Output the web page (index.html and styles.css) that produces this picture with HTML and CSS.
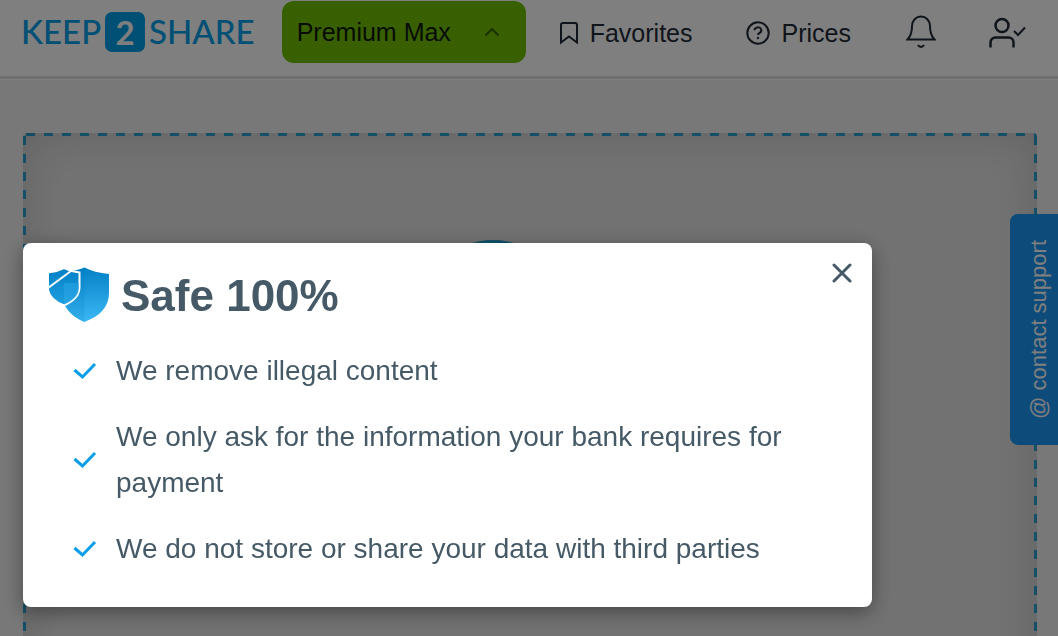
FILE: index.html
```html
<!DOCTYPE html>
<html lang="en">
<head>
    <meta charset="UTF-8">
    <meta name="viewport" content="width=device-width, initial-scale=1.0">
    <title>Keep2Share</title>
    <link rel="stylesheet" href="styles.css">
</head>
<body>
    <header class="header">
        <a href="#" class="logo"><span class="logo-word">KEEP</span><span class="logo-two">2</span><span class="logo-word">SHARE</span></a>
        <button type="button" class="premium">
            Premium Max
            <svg class="premium-arrow" width="16" height="10" viewBox="0 0 16 10"><path d="M1.5 8.5 8 2l6.500 6.500"/></svg>
        </button>
        <nav class="nav">
            <a href="#" class="nav-link">
                <svg width="20" height="24" viewBox="0 0 20 24"><path d="M2 21.5V4a2 2 0 0 1 2-2h12a2 2 0 0 1 2 2v17.5l-8-6z"/></svg>
                Favorites
            </a>
            <a href="#" class="nav-link">
                <svg width="24" height="24" viewBox="0 0 24 24"><circle cx="12" cy="12" r="10.7"/><path d="M8.5 9.3a3.4 3 0 1 1 5 2.7c-1 .5-1.5 1-1.500 2"/><circle class="dot" cx="12" cy="17" r="1.2"/></svg>
                Prices
            </a>
        </nav>
        <div class="user-tools">
            <button type="button" aria-label="Notifications">
                <svg width="30" height="34" viewBox="0 0 30 34"><path d="M1.5 24.5C5 21 6 17 6 11a9 9.500 0 0 1 18 0c0 6 1 10 4.500 13.500z"/><path d="M12 30c1.500 2.500 4.500 2.500 6 0"/></svg>
            </button>
            <button type="button" aria-label="Account">
                <svg width="38" height="34" viewBox="0 0 38 34"><g stroke-width="2.5"><circle cx="14" cy="10.5" r="6.5"/><path d="M2.5 32.5v-5a5 5 0 0 1 5-5h13a5 5 0 0 1 5 5v5"/></g><path d="m26 16 4 4 7-7.500"/></svg>
            </button>
        </div>
    </header>

    <main class="main">
        <section class="upload">
            <div class="upload-circle"></div>
        </section>
    </main>

    <a href="#" class="support">@ contact support</a>

    <div class="overlay">
        <div class="modal" role="dialog" aria-modal="true" aria-labelledby="modal-title">
            <div class="modal-head">
                <svg class="shield" width="62" height="58" viewBox="0 0 62 58">
                    <defs>
                        <linearGradient id="shield" x1="0" y1="0" x2="0" y2="1">
                            <stop offset="0" stop-color="#0480c6"/>
                            <stop offset="1" stop-color="#3bb9f5"/>
                        </linearGradient>
                        <linearGradient id="shield-small" x1="0" y1="0" x2="0" y2="1">
                            <stop offset="0" stop-color="#0480c6"/>
                            <stop offset="1" stop-color="#1f9fe0"/>
                        </linearGradient>
                    </defs>
                    <path d="M37.5 .5C44 4 52 6 62 7v19c0 14-9 23-24.500 29C28 51 22 46 17.500 38L24 4c5-.5 9-1.500 13.500-3.500z" fill="url(#shield)"/>
                    <path d="M24 4c5-.5 9-1.500 13.500-3.500V55C28 51 22 46 17.500 38z" fill="#0074b8" opacity=".15"/>
                    <path class="line" d="M1 5.500c6-.5 11-2 16-4.500 5 2.500 10 4 15.500 4.500V20c0 9-6 14-15.500 18.500C8 35 2 29 1 23z" fill="url(#shield-small)"/>
                    <path d="M17 16h15v5c0 8-6 13-15 16.500z" fill="#2ba8e8" opacity=".5"/>
                    <path class="line" d="M1 21 24 4"/>
                </svg>
                <h2 class="modal-title" id="modal-title">Safe 100%</h2>
                <button type="button" class="close" aria-label="Close">
                    <svg width="20" height="20" viewBox="0 0 20 20"><path d="m2 2 16 16M18 2 2 18"/></svg>
                </button>
            </div>
            <ul class="safe-list">
                <li>
                    <svg class="check" width="24" height="18" viewBox="0 0 24 18"><path d="m1.500 8 8 7L22 2"/></svg>
                    <span>We remove illegal content</span>
                </li>
                <li>
                    <svg class="check" width="24" height="18" viewBox="0 0 24 18"><path d="m1.500 8 8 7L22 2"/></svg>
                    <span>We only ask for the information your bank requires for payment</span>
                </li>
                <li>
                    <svg class="check" width="24" height="18" viewBox="0 0 24 18"><path d="m1.500 8 8 7L22 2"/></svg>
                    <span>We do not store or share your data with third parties</span>
                </li>
            </ul>
        </div>
    </div>
</body>
</html>
```

FILE: styles.css
```css
* {
    margin: 0;
    padding: 0;
    box-sizing: border-box;
}

body {
    display: flex;
    flex-direction: column;
    height: 100vh;
    overflow: hidden;
    background-color: #f0f0f0;
    font-family: "Liberation Sans", Arial, sans-serif;
    font-size: 25px;
    color: #1f2a36;
}

a {
    color: inherit;
    text-decoration: none;
}

button {
    border: none;
    background: none;
    font: inherit;
    color: inherit;
    cursor: pointer;
}

svg {
    display: block;
    flex-shrink: 0;
    fill: none;
    stroke: currentColor;
    stroke-width: 2;
}

/* Header */
.header {
    display: flex;
    align-items: flex-start;
    flex-shrink: 0;
    height: 79px;
    padding: 1px 32px 0 21px;
    background-color: #ffffff;
    border-bottom: 3px solid #d8dedc;
    box-shadow: 0 1px 0 #ffffff;
}

.logo {
    display: flex;
    align-items: center;
    gap: 4px;
    height: 62px;
    font-family: Lato, sans-serif;
    font-size: 33px;
    color: #009ee8;
}

.logo-word {
    padding-bottom: 2px;
    font-weight: 500;
}

.logo-two {
    width: 40px;
    height: 40px;
    border-radius: 7px;
    background-color: #009ee8;
    color: #ffffff;
    font-weight: 700;
    line-height: 40px;
    text-align: center;
}

.premium {
    display: flex;
    align-items: center;
    justify-content: space-between;
    width: 244px;
    height: 62px;
    margin-left: 27px;
    padding: 0 26px 0 15px;
    border-radius: 12px;
    background-color: #70c000;
    color: #101810;
}

.premium-arrow {
    color: #386000;
}

.nav {
    display: flex;
    gap: 54px;
    margin-left: 33px;
}

.nav-link {
    display: flex;
    align-items: center;
    gap: 11px;
    height: 64px;
}

.nav-link .dot {
    fill: currentColor;
    stroke: none;
}

.user-tools {
    display: flex;
    align-items: center;
    gap: 52px;
    height: 62px;
    margin-left: auto;
}

/* Upload area, the dashes are drawn as gradient strips */
.main {
    flex: 1;
    padding: 54px 21px 0 23px;
    overflow: hidden;
}

.upload {
    display: flex;
    justify-content: center;
    height: 100vh;
    padding: 107px 74px 0 0;
    border-radius: 4px;
    background:
        repeating-linear-gradient(90deg, #2cacdf 0 9px, transparent 9px 18px) 3px 0 / 100% 3px no-repeat,
        repeating-linear-gradient(180deg, #2cacdf 0 9px, transparent 9px 18px) 0 3px / 3px 100% no-repeat,
        repeating-linear-gradient(180deg, #2cacdf 0 9px, transparent 9px 18px) 100% 3px / 3px 100% no-repeat,
        #e5e5e5;
    box-shadow: inset 0 0 45px rgba(0, 0, 0, 0.15);
}

.upload-circle {
    width: 150px;
    height: 150px;
    border-radius: 50%;
    background-color: #1fa8d8;
}

.support {
    position: fixed;
    top: 214px;
    right: 0;
    padding: 26px 14px 26px 4px;
    border-radius: 0 8px 8px 0;
    background-color: #1a96f4;
    color: #ffffff;
    font-size: 22px;
    line-height: 30px;
    writing-mode: vertical-rl;
    transform: rotate(180deg);
}

/* Modal */
.overlay {
    position: fixed;
    inset: 0;
    padding: 243px 186px 0 23px;
    background-color: rgba(0, 0, 0, 0.5);
}

.modal {
    padding: 20px 20px 35px 24px;
    border-radius: 8px;
    background-color: #ffffff;
    box-shadow: 0 5px 20px rgba(0, 0, 0, 0.4);
    color: #455a66;
}

.modal-head {
    display: flex;
    align-items: center;
    gap: 12px;
}

.shield {
    stroke: none;
}

.shield .line {
    stroke: #ffffff;
}

.modal-title {
    font-size: 44px;
    line-height: 66px;
}

.close {
    align-self: flex-start;
    margin-left: auto;
}

.close svg {
    stroke-width: 3;
    stroke-linecap: round;
}

.safe-list {
    display: flex;
    flex-direction: column;
    gap: 20px;
    margin-top: 19px;
    padding: 0 40px 0 26px;
    font-size: 28px;
    line-height: 46px;
    list-style: none;
}

.safe-list li {
    display: flex;
    align-items: center;
    gap: 19px;
}

.safe-list .check {
    color: #0a9ee8;
    stroke-width: 3;
}
```
